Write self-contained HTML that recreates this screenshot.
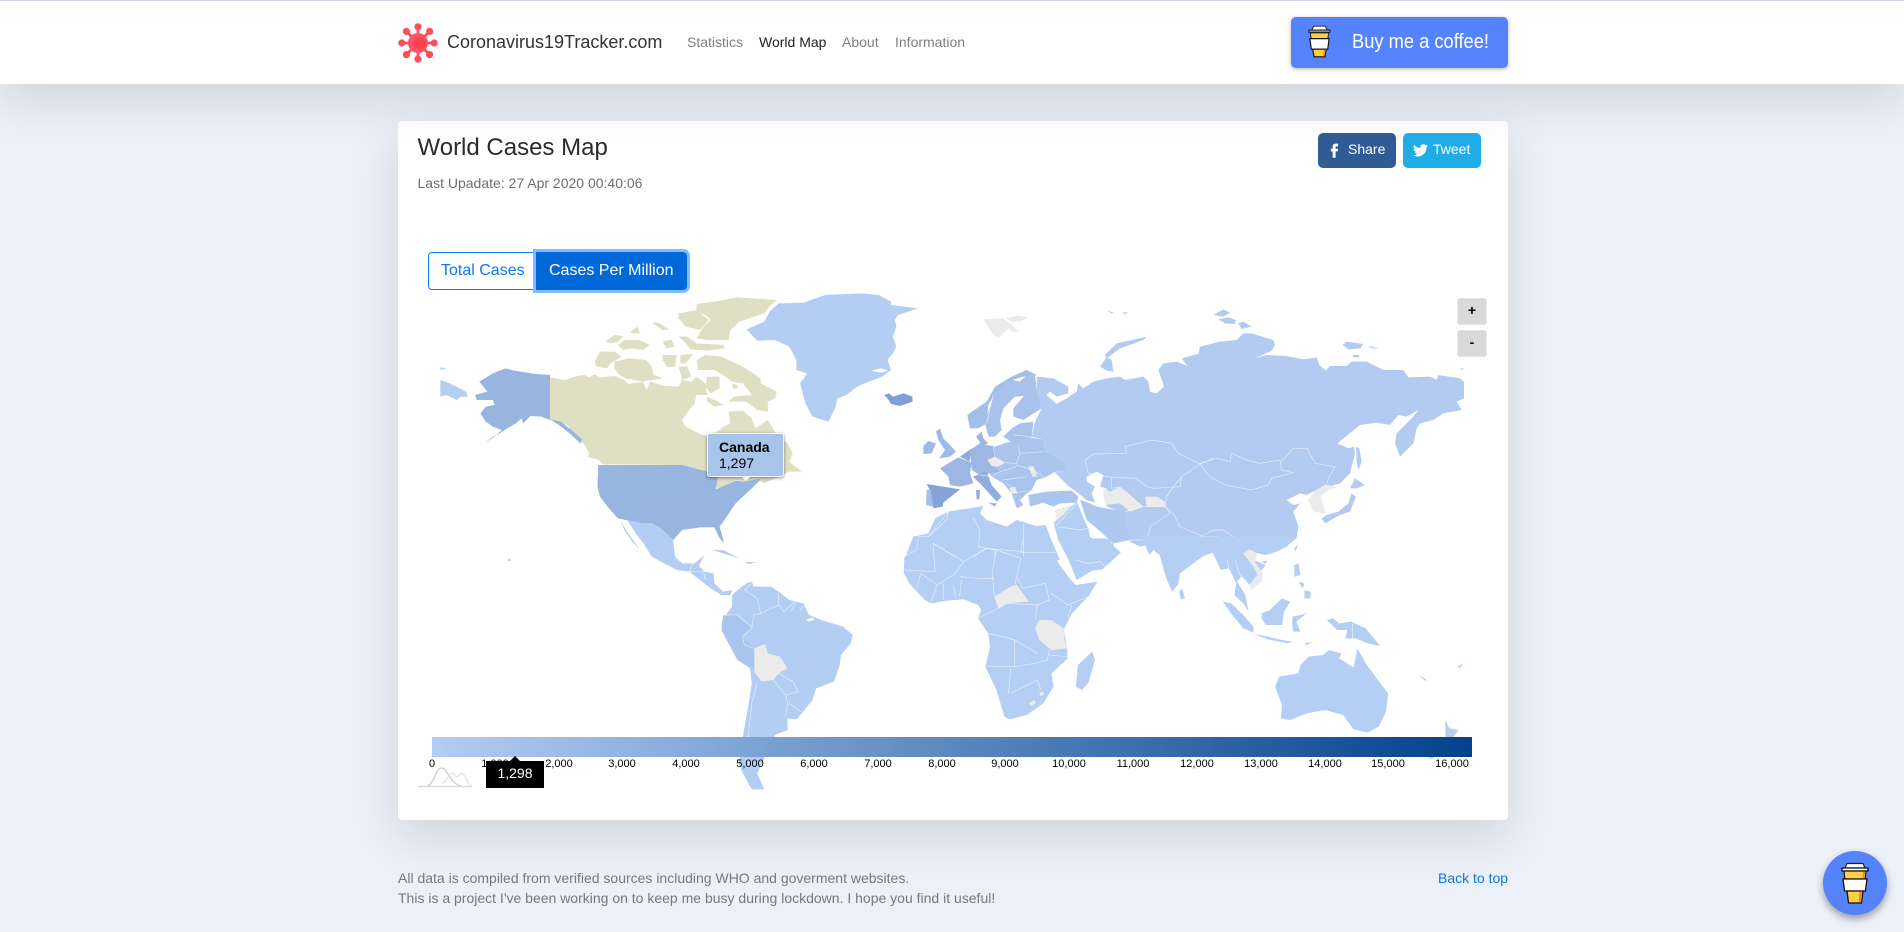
<!DOCTYPE html>
<html lang="en"><head><meta charset="utf-8"><title>World Cases Map</title>
<style>
html,body{margin:0;padding:0}
body{width:1904px;height:932px;overflow:hidden;position:relative;background:#ecf1f9;font-family:"Liberation Sans",sans-serif;font-size:14px;color:#212529}
.a{position:absolute;white-space:nowrap}
#hdr{position:absolute;left:0;top:0;width:1904px;height:84px;background:#fff;border-top:1px solid #cdd7e8;box-sizing:border-box;box-shadow:0 16px 48px rgba(0,0,0,.125);z-index:5}
#card{position:absolute;left:398px;top:121px;width:1110px;height:699px;background:#fff;border-radius:4px;box-shadow:0 16px 48px rgba(0,0,0,.125)}
.nav{position:absolute;top:33px;line-height:16px;font-size:14px;color:#7f7f7f}
.soc{position:absolute;top:133px;height:35px;width:78px;border-radius:5px;color:#fff;font-size:14px;line-height:33px;z-index:6}
#map{position:absolute;left:0;top:0;width:1904px;height:932px;pointer-events:none}
.b polygon{stroke:none}
.l{fill:none;stroke:#fff;stroke-width:.7;stroke-opacity:.65;vector-effect:non-scaling-stroke}
.t{position:absolute;top:758px;font-size:11px;line-height:13px;color:#000;width:50px;text-align:center}
.z{position:absolute;left:1457px;width:30px;height:27px;background:#d9d9d9;border:1px solid #e6e6e6;border-radius:3px;box-sizing:border-box;text-align:center;font-size:14px;line-height:22px;color:#000;font-weight:bold}
</style></head><body>
<div id="card"></div>

<svg id="map" viewBox="0 0 1904 932" xmlns="http://www.w3.org/2000/svg">
<defs><clipPath id="c"><rect x="432" y="290" width="1040" height="500"/></clipPath></defs>
<g clip-path="url(#c)">
<!-- North America -->
<g class="b" transform="translate(400,280) scale(.35714,.33333)">
<g fill="#dedfc3">
<polygon points="420,292 460,300 490,290 515,285 530,292 545,283 560,292 600,288 625,298 640,312 680,305 690,330 700,305 740,318 780,320 790,300 815,305 830,290 855,310 860,345 830,345 825,370 810,390 790,420 800,440 840,462 870,470 905,440 925,430 920,395 960,392 985,415 995,445 1030,420 1055,465 1085,490 1100,520 1090,545 1125,575 1090,575 1060,590 1020,610 1000,598 960,605 940,600 890,630 885,610 890,590 860,575 790,555 570,553 555,540 525,530 530,520 515,490 495,480 470,435 420,420"/>
<polygon points="830,72 900,62 940,52 1055,60 1035,78 1020,100 950,125 925,150 920,180 860,180 830,175 850,140 870,120 855,105 830,95"/>
<polygon points="780,100 830,90 865,120 840,150 800,140 780,115"/>
<polygon points="575,185 600,165 625,168 610,185 590,190"/>
<polygon points="610,195 630,180 670,180 700,195 680,210 650,205 625,210"/>
<polygon points="705,128 725,128 755,150 735,150"/>
<polygon points="645,155 665,140 672,160 650,160"/>
<polygon points="735,185 760,178 768,200 745,205"/>
<polygon points="780,170 805,170 830,190 905,195 910,205 860,212 815,208 800,190"/>
<polygon points="600,245 640,235 690,240 705,260 710,285 735,295 680,305 630,295 610,280 600,265"/>
<polygon points="545,245 560,215 600,215 620,230 590,250 580,265 550,260"/>
<polygon points="735,225 775,225 770,260 750,262 735,240"/>
<polygon points="785,225 820,222 800,250 785,250"/>
<polygon points="830,240 855,225 900,230 960,260 1010,295 1010,310 1055,335 1050,355 1030,365 1030,395 1000,390 970,365 920,365 935,350 985,345 960,310 930,305 905,285 880,270 835,270"/>
<polygon points="860,350 890,365 905,375 880,380 860,365"/>
<polygon points="780,260 805,260 815,290 790,300"/>
<polygon points="860,290 895,290 895,325 870,340 855,320"/>
<polygon points="930,310 945,315 945,325 932,325"/>
</g>
<g fill="#98b5e0">
<polygon points="420,285 420,420 395,410 365,408 345,430 340,415 325,430 300,445 280,460 260,470 235,490 265,470 285,450 260,440 240,425 225,400 240,380 265,375 260,360 215,360 210,345 245,335 222,305 260,280 295,265 320,272 380,282"/>
<polygon points="420,418 450,425 480,450 510,478 505,490 475,460 445,435"/>
<polygon points="555,555 790,555 860,575 890,590 885,628 940,602 960,605 1000,598 1010,598 985,625 960,650 940,670 915,710 895,740 908,790 895,775 880,742 840,742 790,750 765,780 730,745 705,730 680,730 640,722 610,715 585,685 560,650 553,620"/>
</g>
<g fill="#b3cdf3">
<polygon points="113,300 140,310 185,335 190,350 170,350 160,360 130,345 113,350"/>
<polygon points="113,262 130,265 113,270"/>
<polygon points="1060,70 1130,68 1190,45 1290,40 1340,45 1375,65 1375,75 1450,85 1395,105 1385,120 1390,140 1380,170 1390,200 1380,220 1365,240 1375,270 1350,290 1300,310 1280,320 1250,345 1225,355 1220,380 1200,425 1185,420 1155,410 1135,370 1120,310 1140,280 1110,270 1110,240 1090,200 1050,180 1000,182 970,148 1020,125 1035,95"/>
</g>
<polygon fill="#fff" points="1320,272 1345,265 1368,272 1345,278"/>
<polygon fill="#fff" points="1110,285 1135,285 1130,298 1112,292"/>
<polygon fill="#7fa0d5" points="1355,345 1370,340 1380,350 1410,340 1435,350 1435,365 1400,378 1375,372 1365,355"/>
</g>
<!-- Central & South America -->
<g class="b" transform="translate(400,540) scale(.35714,.33333)">
<g fill="#b3cdf3">
<polygon points="636,-60 680,-50 705,-50 730,-35 765,0 770,50 790,70 825,70 853,45 840,70 830,100 810,95 775,90 740,70 705,50 682,10 660,-20"/>
<polygon points="618,-60 635,-25 670,25 650,5 628,-30"/>
<polygon points="810,95 830,70 852,95 878,100 880,130 905,155 930,150 925,165 900,165 870,145 840,120"/>
<polygon points="875,30 905,30 950,55 920,45"/>
<polygon points="965,65 1000,68 975,72"/>
<polygon points="303,56 310,56 310,63 303,63"/>
<polygon points="930,165 945,150 970,130 985,125 990,140 1040,140 1060,155 1090,180 1130,190 1145,225 1180,240 1240,260 1268,285 1262,310 1235,345 1230,380 1215,425 1165,445 1155,480 1125,520 1110,538 1085,535 1085,570 1050,585 1040,610 1000,700 1020,748 985,748 960,700 948,670 960,590 975,500 985,430 980,385 945,360 920,310 900,270 905,235 930,200"/>
</g>
<polygon fill="#a9c4ee" points="905,225 945,225 955,240 915,270 900,265"/>
<polygon fill="#a9c4ee" points="915,270 950,238 985,262 958,290 990,325 993,385 945,360 920,310 900,270"/>
<polygon fill="#ebebeb" points="992,325 1022,312 1030,340 1065,350 1085,385 1060,400 1045,420 1012,425 992,395"/>
<polygon fill="#fff" points="1135,240 1155,232 1160,240 1145,245"/>
<polyline class="l" points="985,130 965,150 1000,175 1010,220 1060,195 1060,160"/>
<polyline class="l" points="1060,195 1075,215 1110,180"/>
<polyline class="l" points="1095,212 1110,185"/>
<polyline class="l" points="1120,210 1135,195"/>
<polyline class="l" points="1010,220 990,225 985,265 958,290 965,315 990,325"/>
<polyline class="l" points="905,225 945,225 985,262"/>
<polyline class="l" points="1045,420 1080,465 1115,455 1100,425 1060,400"/>
<polyline class="l" points="1085,490 1080,530"/>
<polyline class="l" points="1090,490 1122,515"/>
<polyline class="l" points="1000,430 985,490 975,590 970,590"/>
<polyline class="l" points="1080,465 1085,490"/>
<polyline class="l" points="820,70 810,95 850,95 855,120"/>
</g>
<!-- Eurasia -->
<g class="b" transform="translate(880,280) scale(.33333)">
<g fill="#b3caf1">
<polygon points="470,290 520,295 565,320 565,340 530,350 510,335 500,345 530,372 560,355 590,335 595,310 610,325 640,305 680,295 720,290 735,300 790,290 805,305 810,335 830,340 852,320 845,298 835,270 850,250 890,245 922,258 905,235 955,222 960,200 1020,185 1070,180 1090,160 1115,160 1180,180 1185,195 1175,212 1125,235 1160,225 1220,228 1270,238 1310,232 1318,255 1338,272 1350,258 1400,258 1415,245 1460,245 1510,270 1570,270 1585,292 1650,290 1670,300 1675,285 1740,295 1752,305 1752,355 1730,365 1745,390 1690,400 1660,420 1620,430 1610,445 1600,490 1560,530 1545,490 1550,460 1600,410 1615,390 1580,410 1555,405 1530,435 1490,428 1440,435 1390,475 1372,490 1405,505 1422,500 1425,520 1410,580 1380,610 1345,620 1335,615 1305,632 1280,645 1260,640 1220,660 1240,675 1260,670 1240,695 1255,740 1250,770 1220,800 1190,815 1155,825 1020,790 900,770 780,800 750,785 735,700 680,680 620,660 595,640 565,618 525,578 555,570 555,545 495,515 490,480 455,470 465,425 485,385 470,330"/>
<polygon points="675,225 710,190 800,170 790,180 720,205 680,235"/>
<polygon points="660,260 680,232 695,240 700,275 680,272"/>
<polygon points="680,92 700,97 695,100"/>
<polygon points="725,98 745,97 735,103"/>
<polygon points="1000,105 1030,88 1050,98 1030,110"/>
<polygon points="1015,118 1045,112 1068,120 1065,132 1035,130"/>
<polygon points="1075,130 1090,125 1115,140 1085,147"/>
<polygon points="1388,195 1400,185 1450,192 1440,205 1405,208"/>
<polygon points="1465,198 1500,205 1475,205"/>
<polygon points="1418,225 1435,225 1440,232 1420,232"/>
<polygon points="1743,265 1752,265 1745,270"/>
<polygon points="1428,500 1438,505 1445,545 1435,570 1430,545"/>
<polygon points="1325,715 1340,705 1375,695 1405,670 1415,640 1428,650 1410,695 1380,705 1335,730"/>
<polygon points="1410,625 1425,595 1455,615 1430,625"/>
</g>
<polygon fill="#b5cef3" points="520,728 590,665 625,745 650,785 700,790 700,800 535,778"/>
<g fill="#ebebeb">
<polygon points="310,118 370,115 400,140 418,155 395,155 385,145 355,175 340,165"/>
<polygon points="375,115 415,107 445,112 420,125 395,125"/>
</g>
<!-- Europe -->
<polygon fill="#aac4ee" points="270,510 300,490 345,500 380,488 440,470 490,480 495,515 555,545 555,570 520,578 500,590 470,600 455,630 440,640 420,660 430,675 410,685 395,640 370,610 335,590 325,575 275,570"/>
<polygon fill="#a3bee9" points="262,405 290,385 320,365 345,320 395,290 440,270 470,285 430,290 395,300 345,340 325,375 320,430 295,445 270,445"/>
<polygon fill="#a8c2ec" points="340,345 395,298 420,305 432,348 405,350 370,385 360,420 365,450 345,470 325,470 315,430"/>
<polygon fill="#a8c2ec" points="420,305 440,285 465,285 470,330 485,385 430,420 400,410 400,385 432,348"/>
<polygon fill="#a8c2ec" points="420,430 460,425 455,470 400,490 370,470 395,445"/>
<polygon fill="#9cb7e3" points="288,470 305,455 310,475 325,490 305,495"/>
<polygon fill="#9eb9e5" points="168,455 180,445 190,475 210,495 228,515 210,530 178,535 195,510 175,480"/>
<polygon fill="#9eb9e5" points="130,498 145,483 168,490 155,520 130,522"/>
<polygon fill="#9cb7e3" points="180,565 235,532 275,548 270,580 280,610 240,620 210,615 205,590"/>
<polygon fill="#8eabdc" points="240,530 275,505 268,545"/>
<polygon fill="#9cb7e3" points="270,510 300,490 340,500 345,530 325,540 345,565 325,572 275,565"/>
<polygon fill="#9cb7e3" points="275,570 350,565 360,575 300,585"/>
<polygon fill="#92aedf" points="278,590 320,575 335,615 365,650 350,665 300,610"/>
<polygon fill="#92aedf" points="288,630 300,630 298,658 290,658"/>
<polygon fill="#92aedf" points="325,668 350,670 345,680"/>
<polygon fill="#84a3d6" points="140,612 240,628 190,668 188,680 160,685 152,635"/>
<polygon fill="#a3bee9" points="140,630 152,628 160,680 138,675"/>
<polygon fill="#ebebeb" points="322,540 345,530 375,548 355,560 335,558"/>
<polygon fill="#ebebeb" points="445,560 460,558 472,590 458,590"/>
<polygon fill="#ebebeb" points="388,625 405,620 412,640 395,640"/>
<polygon fill="#abc5ee" points="445,645 500,635 575,632 595,650 590,668 540,670 520,680 490,668 450,680"/>
<polygon fill="#fff" points="620,590 650,575 670,585 660,620 680,625 680,680 650,680 635,640 645,620 620,605"/>
<polygon fill="#aec7ef" points="600,660 630,670 650,680 735,695 750,780 700,790 650,745 620,720"/>
<polygon fill="#fff" points="625,745 640,770 660,785 690,790 695,800 670,795 650,790 630,770"/>
<polygon fill="#ebebeb" points="668,625 690,635 720,620 745,640 790,680 750,695 720,670 675,675"/>
<polygon fill="#ebebeb" points="795,650 830,650 855,665 855,680 800,680"/>
<polygon fill="#ebebeb" points="525,690 575,675 555,700 530,722"/>
<polygon fill="#ebebeb" points="1335,615 1375,620 1345,632 1320,650 1330,670 1335,700 1300,695 1285,660 1305,632"/>
<polygon fill="#b5cef3" points="72,840 100,770 145,760 165,715 205,695 310,678 300,700 320,720 380,740 410,720 470,738 497,735 510,770 540,840"/>
<polyline class="l" points="615,540 640,522 740,520 735,500 815,480 875,490 895,520 960,552 1000,535"/>
<polyline class="l" points="615,540 625,580 695,592 770,595 800,620 820,625 900,620 905,590 960,552"/>
<polyline class="l" points="695,592 695,625 720,620"/>
<polyline class="l" points="960,550 1010,535 1050,545 1055,520 1100,540 1140,550 1200,540 1205,570 1240,578 1175,595 1165,615 1115,630 1035,615 990,590 960,552"/>
<polyline class="l" points="1205,545 1240,505 1280,505 1305,550 1365,560 1345,595 1338,620"/>
<polyline class="l" points="905,590 880,620 860,650 855,680 880,700 900,740 970,770 1020,770"/>
<polyline class="l" points="735,695 790,680 855,680 870,700 810,740 800,780 750,780"/>
<polyline class="l" points="595,650 605,700 625,745"/>
<polyline class="l" points="530,740 600,750 625,745"/>
<polyline class="l" points="520,728 530,735 600,660"/>
<polyline class="l" points="960,770 1000,750 1030,750 1060,770 1045,800 1070,830"/>
<polyline class="l" points="340,500 345,530"/>
<polyline class="l" points="415,500 420,520 410,550 375,548"/>
<polyline class="l" points="420,520 490,515"/>
<polyline class="l" points="400,465 450,470"/>
<polyline class="l" points="410,555 460,570 490,590"/>
<polyline class="l" points="360,575 410,560"/>
<polyline class="l" points="370,600 440,590"/>
<polyline class="l" points="395,640 440,632"/>
<polyline class="l" points="380,610 400,625"/>
<polyline class="l" points="300,585 335,590 360,575"/>
<polyline class="l" points="320,430 340,345"/>
<polyline class="l" points="72,830 110,810 115,770 145,770"/>
<polyline class="l" points="145,770 205,695"/>
<polyline class="l" points="205,695 200,720 145,770"/>
<polyline class="l" points="280,715 300,750 295,800 320,805 430,815"/>
<polyline class="l" points="430,730 430,840"/>
<polyline class="l" points="160,790 240,840"/>
<polyline class="l" points="265,840 320,805 345,810 345,840"/>
</g>
<!-- Africa, S Asia, Oceania -->
<g class="b" transform="translate(880,540) scale(.40816,.33333)">
<g fill="#b5cef3">
<polygon points="60,50 58,100 75,135 110,180 125,190 165,182 205,178 240,195 248,210 240,235 265,280 270,320 258,380 285,450 305,530 318,538 360,525 400,490 425,440 420,400 460,355 458,320 450,270 470,220 510,170 533,125 480,135 468,120 440,75 430,50"/>
<polygon points="520,335 527,360 510,430 495,450 480,440 485,375"/>
<polygon points="435,-5 462,60 480,115 482,120 520,92 545,88 590,38 565,10 572,0 550,-5"/>
<polygon points="640,-10 660,45 670,30 685,45 700,110 715,155 730,135 735,100 790,50 815,38 835,90 855,85 873,130 868,165 890,190 903,215 895,165 875,125 885,110 905,135 925,105 945,75 915,60 925,35 960,40 1000,15 1025,-10"/>
<polygon points="935,65 948,62 945,72"/>
<polygon points="1015,25 1025,10 1018,35"/>
<polygon points="733,155 740,145 747,175 737,178"/>
<polygon points="1030,375 1050,350 1085,345 1100,330 1130,340 1125,355 1160,382 1170,325 1190,370 1220,420 1245,460 1240,515 1222,560 1195,578 1160,568 1135,525 1090,510 1045,520 1005,540 982,535 985,495 968,440 978,410 1025,400"/>
<polygon points="1385,540 1395,565 1418,570 1400,595 1385,590"/>
<polygon points="1340,651 1360,651 1350,656"/>
<polygon points="840,185 860,190 890,225 915,260 915,278 890,265 860,220"/>
<polygon points="915,282 950,290 985,300 1010,305 1000,310 950,298"/>
<polygon points="935,220 955,210 985,175 1005,185 990,215 985,255 945,255 935,235"/>
<polygon points="1010,230 1030,225 1045,220 1020,245 1030,275 1012,275 1010,250"/>
<polygon points="1015,75 1025,70 1030,105 1015,110"/>
<polygon points="1040,150 1055,155 1055,175 1040,175"/>
<polygon points="1025,125 1040,130 1035,145"/>
<polygon points="1095,240 1110,235 1125,250 1155,245 1190,265 1225,318 1195,310 1165,295 1140,295 1145,270 1120,270"/>
<polygon points="1040,310 1060,305 1045,316"/>
<polygon points="1415,380 1430,370 1420,385"/>
<polygon points="1320,405 1340,420 1335,422"/>
</g>
<polygon fill="#ebebeb" points="280,170 320,140 335,135 365,185 310,190 290,205"/>
<polygon fill="#ebebeb" points="390,240 420,240 450,265 452,300 460,325 420,330 390,300 380,265"/>
<polygon fill="#ebebeb" points="365,490 378,480 382,490 370,498"/>
<polygon fill="#ebebeb" points="390,458 400,455 402,465 393,468"/>
<polygon fill="#ebebeb" points="890,40 905,28 925,40 918,65 938,100 935,125 910,150 905,135 925,105 915,80"/>
<polyline class="l" points="60,90 135,95 130,10"/>
<polyline class="l" points="130,10 205,65 260,25 285,30 345,55 335,110 330,135"/>
<polyline class="l" points="205,65 185,100 140,135 125,185"/>
<polyline class="l" points="285,30 275,100 280,170"/>
<polyline class="l" points="195,110 240,115 280,115"/>
<polyline class="l" points="200,120 195,170"/>
<polyline class="l" points="155,130 155,180"/>
<polyline class="l" points="180,135 185,175"/>
<polyline class="l" points="90,145 100,100 140,135"/>
<polyline class="l" points="350,0 345,38 430,38"/>
<polyline class="l" points="335,110 350,145 405,130 415,180 385,195"/>
<polyline class="l" points="420,160 460,195 510,170"/>
<polyline class="l" points="470,195 460,235"/>
<polyline class="l" points="385,195 380,240"/>
<polyline class="l" points="240,235 290,205 310,190 385,195"/>
<polyline class="l" points="265,280 300,290 330,300 385,340"/>
<polyline class="l" points="330,300 330,380 258,378"/>
<polyline class="l" points="320,385 315,460"/>
<polyline class="l" points="330,380 380,370 410,360 415,330"/>
<polyline class="l" points="320,460 385,420 395,450"/>
<polyline class="l" points="460,350 415,345"/>
<polyline class="l" points="478,60 510,70 540,65 560,90"/>
<polyline class="l" points="870,60 880,100 905,135"/>
<polyline class="l" points="850,60 855,85"/>
<polyline class="l" points="1158,250 1158,300"/>
</g>
</g>
</svg>

<div id="hdr">
<svg class="a" style="left:398px;top:22px" width="40" height="40" viewBox="0 0 40 40">
<g stroke="#fc4f5c" stroke-width="2.800"><line x1="20" y1="4" x2="20" y2="36"/><line x1="4" y1="20" x2="36" y2="20"/><line x1="8.700" y1="8.700" x2="31.300" y2="31.300"/><line x1="8.700" y1="31.300" x2="31.300" y2="8.700"/></g>
<g fill="#fc4f5c"><circle cx="20" cy="3.800" r="3.600"/><circle cx="20" cy="36.200" r="3.600"/><circle cx="3.800" cy="20" r="3.600"/><circle cx="36.200" cy="20" r="3.600"/><circle cx="8.400" cy="8.400" r="3.600"/><circle cx="31.600" cy="8.400" r="3.600"/><circle cx="8.400" cy="31.600" r="3.600"/><circle cx="31.600" cy="31.600" r="3.600"/></g>
<circle cx="20" cy="20" r="10" fill="#fd5463"/><circle cx="22" cy="20" r="6" fill="#f8424f"/>
</svg>
<div class="a" style="left:447px;top:30px;font-size:18px;line-height:22px;color:#333">Coronavirus19Tracker.com</div>
<div class="nav" style="left:687px">Statistics</div>
<div class="nav" style="left:759px;color:#222">World Map</div>
<div class="nav" style="left:842px">About</div>
<div class="nav" style="left:895px">Information</div>
<div class="a" style="left:1291px;top:16px;width:217px;height:51px;background:#5583fb;border-radius:5px;box-shadow:0 1px 4px rgba(0,0,0,.3)"></div>
<svg class="a" style="left:1308px;top:24px" width="23" height="33" viewBox="0 0 24 34">
<path d="M6 1h12l2 4H4z" fill="#fff" stroke="#222" stroke-width="1"/>
<path d="M1 5h22v2.500H1z" fill="#999" stroke="#222" stroke-width="1"/>
<path d="M2.500 8h19l-.8 6H3.300z" fill="#ffd13f" stroke="#222" stroke-width="1"/>
<path d="M2 14h20l-1.400 11H3.400z" fill="#fff" stroke="#111" stroke-width="1.200"/>
<path d="M5 25h14l-1.300 8H6.300z" fill="#ffd13f" stroke="#111" stroke-width="1.200"/>
<path d="M16.500 25.500h2l-1.200 7h-1.600z" fill="#f08a24"/>
</svg>
<div class="a" style="left:1352px;top:29px;font-size:20px;line-height:24px;color:#fff;transform:scaleX(.915);transform-origin:0 0">Buy me a coffee!</div>
</div>

<div class="a" style="left:417.500px;top:133px;font-size:24px;line-height:29px;color:#2b2b2b">World Cases Map</div>
<div class="a" style="left:417.500px;top:174px;font-size:14px;line-height:18px;color:#6e6e6e">Last Upadate: 27 Apr 2020 00:40:06</div>

<div class="soc" style="left:1318px;background:#315b94"><svg class="a" style="left:12px;top:10px" width="9" height="15" viewBox="0 0 10 16"><path d="M3 16V9H1V6h2V4c0-2.400 1.300-3.600 3.400-3.600H9v3H7.200C6.400 3.400 6.200 3.800 6.200 4.500V6H9L8.600 9H6.200v7z" fill="#fff"/></svg><span class="a" style="left:30px">Share</span></div>
<div class="soc" style="left:1403px;background:#1fade8"><svg class="a" style="left:10px;top:11px" width="15" height="13" viewBox="0 0 24 20"><path d="M24 2.400c-.9.4-1.800.7-2.800.8 1-.6 1.800-1.600 2.200-2.700-1 .6-2 1-3.100 1.200C19.300.7 18 0 16.600 0c-2.700 0-4.900 2.200-4.900 4.900 0 .4 0 .8.1 1.100C7.700 5.800 4.100 3.900 1.700.9c-.4.700-.7 1.600-.7 2.500 0 1.700.9 3.200 2.200 4.100-.8 0-1.600-.2-2.200-.6v.1c0 2.400 1.700 4.400 3.900 4.800-.7.2-1.500.2-2.200.1.6 2 2.400 3.400 4.600 3.400C5.500 16.600 3.300 17.400 1 17.400c-.3 0-.7 0-1-.1C2.200 18.700 4.800 19.500 7.500 19.500c9.100 0 14-7.500 14-14v-.6c1-.7 1.800-1.600 2.500-2.500z" fill="#fff"/></svg><span class="a" style="left:30px">Tweet</span></div>

<div class="a" style="left:428px;top:252px;width:109px;height:38px;box-sizing:border-box;border:1px solid #0d7de8;border-radius:4px 0 0 4px;background:#fff;color:#0a7bf0;font-size:16px;line-height:36px;padding-left:12px">Total Cases</div>
<div class="a" style="left:536px;top:252px;width:151px;height:38px;box-sizing:border-box;background:#0069d9;border-radius:0 4px 4px 0;box-shadow:0 0 0 3px #80bdff;color:#fff;font-size:16px;line-height:38px;padding-left:13px">Cases Per Million</div>

<div class="z" style="top:298px">+</div>
<div class="z" style="top:330px">-</div>

<div class="a" style="left:432px;top:737px;width:1040px;height:20px;background:linear-gradient(90deg,#b3cdf3,#03428d)"></div>
<div class="t" style="left:407px">0</div><div class="t" style="left:470px">1,000</div><div class="t" style="left:534px">2,000</div><div class="t" style="left:597px">3,000</div><div class="t" style="left:661px">4,000</div><div class="t" style="left:725px">5,000</div><div class="t" style="left:789px">6,000</div><div class="t" style="left:853px">7,000</div><div class="t" style="left:917px">8,000</div><div class="t" style="left:980px">9,000</div><div class="t" style="left:1044px">10,000</div><div class="t" style="left:1108px">11,000</div><div class="t" style="left:1172px">12,000</div><div class="t" style="left:1236px">13,000</div><div class="t" style="left:1300px">14,000</div><div class="t" style="left:1363px">15,000</div><div class="t" style="left:1427px">16,000</div>

<svg class="a" style="left:418px;top:763px" width="56" height="26" viewBox="0 0 56 26" fill="none"><path d="M0 23.500H54" stroke="#dcdcdc" stroke-width="1.500"/><path d="M10 23C16 20 18 6 23 5c6-1 9 16 20 18" stroke="#cfcfcf" stroke-width="1.300"/><path d="M24 20c4 0 7-10 10-10 2 0 3 4 5 4 2 0 3-5 6-3 3 3 4 10 9 12" stroke="#e2e2e2" stroke-width="1.200"/></svg>
<div class="a" style="left:486px;top:761px;width:58px;height:27px;background:#000;color:#fff;text-align:center;font-size:14px;line-height:25px"><span class="a" style="left:24px;top:-5px;width:0;height:0;border-left:5px solid transparent;border-right:5px solid transparent;border-bottom:5px solid #000"></span>1,298</div>

<div class="a" style="left:707px;top:433px;width:77px;height:44px;box-sizing:border-box;background:#a9c4ea;border:1px solid #f4f6fb;border-radius:3px;box-shadow:0 1px 3px rgba(0,0,0,.45);color:#000;font-size:14px;line-height:16px;padding:5px 0 0 11px"><b>Canada</b><br>1,297<span class="a" style="left:33px;top:42px;width:0;height:0;border-left:5px solid transparent;border-right:5px solid transparent;border-top:5px solid #f4f6fb"></span></div>

<div class="a" style="left:398px;top:868px;font-size:14px;line-height:20px;color:#747a82;white-space:pre-line">All data is compiled from verified sources including WHO and goverment websites.
This is a project I've been working on to keep me busy during lockdown. I hope you find it useful!</div>
<div class="a" style="left:1438px;top:869px;font-size:14px;line-height:18px;color:#0a79d6">Back to top</div>

<div class="a" style="left:1823px;top:851px;width:64px;height:64px;border-radius:50%;background:#5583fb;box-shadow:0 4px 8px rgba(0,0,0,.35)"></div>
<svg class="a" style="left:1841px;top:862px" width="28" height="42" viewBox="0 0 28 42">
<path d="M6 1.500h16l2 4.500H4z" fill="#fff" stroke="#222" stroke-width="1.200"/>
<path d="M1 6h26v3H1z" fill="#fff" stroke="#111" stroke-width="1.300"/>
<path d="M3 9h22l-.8 8H3.800z" fill="#ffd13f" stroke="#111" stroke-width="1.200"/>
<path d="M22 9.500h2.500l-.7 7H21.500z" fill="#f08a24"/>
<path d="M2 17h24l-1.600 12H3.600z" fill="#fff" stroke="#111" stroke-width="1.300"/>
<path d="M6 29h16l-1.500 12h-13z" fill="#ffd13f" stroke="#111" stroke-width="1.300"/>
<path d="M18.500 29.500h3l-1.400 11h-2.500z" fill="#f08a24"/>
</svg>
</body></html>
